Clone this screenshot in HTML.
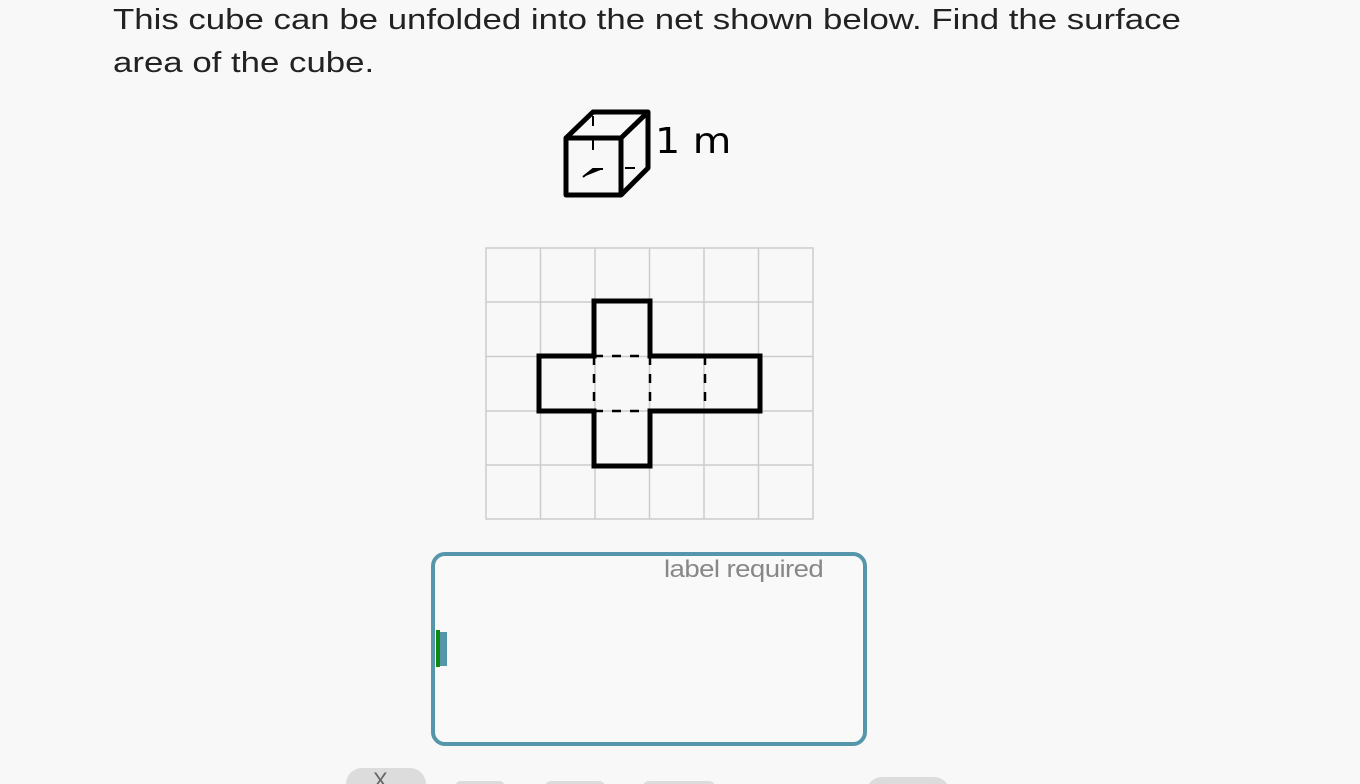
<!DOCTYPE html>
<html><head><style>
html,body{margin:0;width:1360px;height:784px;overflow:hidden}
body{background:#f8f8f8;position:relative;font-family:"Liberation Sans",Arial,sans-serif}
.t{position:absolute;left:113px;top:-1px;font-size:29px;line-height:43px;color:#222;transform:scaleX(1.2);transform-origin:0 0;white-space:nowrap}
.box{position:absolute;left:431px;top:552px;width:428px;height:186px;border:4px solid #5596ab;border-radius:14px;background:#f9f9f9}
.lab{position:absolute;left:664px;top:556px;font-size:24px;color:#888;letter-spacing:-0.5px;transform:scaleX(1.15);transform-origin:0 0;white-space:nowrap}
.g{position:absolute;background:#dcdcdc;border-radius:16px}
</style></head><body>
<div class="t">This cube can be unfolded into the net shown below. Find the surface<br>area of the cube.</div>
<svg width="1360" height="784" style="position:absolute;left:0;top:0">
<g fill="none" stroke="#000" stroke-width="5" stroke-linejoin="round">
<rect x="566" y="138" width="55" height="57"/>
<path d="M566 138 L593 112 L648 112 L621 138 M648 112 L648 168 L621 195"/>
</g>
<g stroke="#000" stroke-width="2"><path d="M593 116v10 M593 138v12 M583 177l10-8h10 M625 168h10"/></g>
<text x="655" y="153" font-family="DejaVu Sans" font-size="36" fill="#000" transform="translate(655 0) scale(1.1 1) translate(-655 0)">1 m</text>
<g stroke="#ccc" stroke-width="1.5" fill="none">
<rect x="486" y="248" width="327" height="271"/>
<path d="M540.5 248v271M595 248v271M649.5 248v271M704 248v271M758.5 248v271M486 302h327M486 356.5h327M486 411h327M486 465h327"/>
</g>
<path d="M594 301H650V356H760V411H650V466H594V411H539V356H594Z" fill="none" stroke="#000" stroke-width="5"/>
<path d="M594 356H650M594 411H650M594 356V411M650 356V411M705 356V411" stroke="#000" stroke-width="2.5" stroke-dasharray="9 9" fill="none"/>
</svg>
<div class="box"></div>
<div class="lab">label required</div>
<div style="position:absolute;left:436px;top:630px;width:4px;height:37px;background:#118811"></div>
<div style="position:absolute;left:440px;top:632px;width:7px;height:34px;background:#5596ab"></div>
<div class="g" style="left:346px;top:768px;width:80px;height:40px"></div>
<div style="position:absolute;left:373px;top:768px;font-size:22px;color:#666">X</div>
<div class="g" style="left:455px;top:781px;width:50px;height:30px;border-radius:6px"></div>
<div class="g" style="left:545px;top:781px;width:60px;height:30px;border-radius:6px"></div>
<div class="g" style="left:643px;top:781px;width:72px;height:30px;border-radius:6px"></div>
<div class="g" style="left:866px;top:777px;width:84px;height:40px"></div>
</body></html>
